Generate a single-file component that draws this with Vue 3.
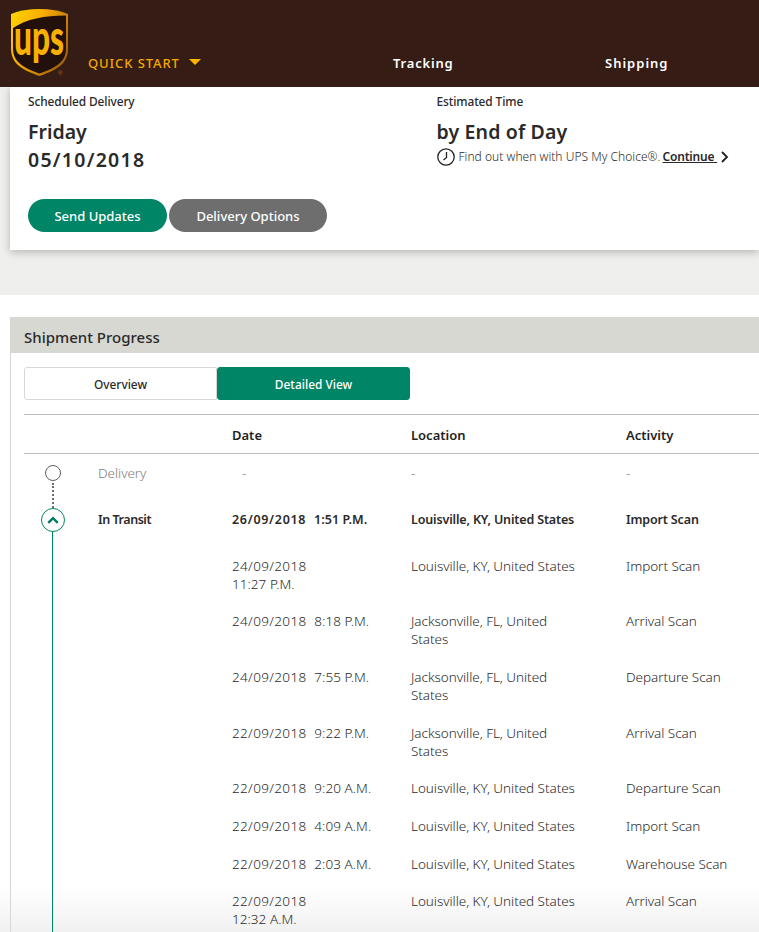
<script setup>
const rows = [
  { date: '24/09/2018', time: '11:27 P.M.', wrap: true, loc: 'Louisville, KY, United States', act: 'Import Scan', h: 55 },
  { date: '24/09/2018', time: '8:18 P.M.', loc: 'Jacksonville, FL, United States', act: 'Arrival Scan', h: 56 },
  { date: '24/09/2018', time: '7:55 P.M.', loc: 'Jacksonville, FL, United States', act: 'Departure Scan', h: 56 },
  { date: '22/09/2018', time: '9:22 P.M.', loc: 'Jacksonville, FL, United States', act: 'Arrival Scan', h: 55 },
  { date: '22/09/2018', time: '9:20 A.M.', loc: 'Louisville, KY, United States', act: 'Departure Scan', h: 38 },
  { date: '22/09/2018', time: '4:09 A.M.', loc: 'Louisville, KY, United States', act: 'Import Scan', h: 38 },
  { date: '22/09/2018', time: '2:03 A.M.', loc: 'Louisville, KY, United States', act: 'Warehouse Scan', h: 37 },
  { date: '22/09/2018', time: '12:32 A.M.', wrap: true, loc: 'Louisville, KY, United States', act: 'Arrival Scan', h: 55 }
]
</script>

<template>
  <div class="page">
    <div class="fade"></div>
    <header class="topbar">
      <svg class="logo" width="60" height="72" viewBox="0 0 60 72">
        <defs>
          <linearGradient id="gold" x1="0" y1="0" x2="1" y2="0.6">
            <stop offset="0" stop-color="#ffd800" />
            <stop offset="0.45" stop-color="#f7ab00" />
            <stop offset="1" stop-color="#a9660a" />
          </linearGradient>
        </defs>
        <path d="M29.500 1C19 1 9 2.800 1 6V40C1 54 9 61 29.500 68C50 61 58 54 58 40V6C50 2.800 40 1 29.500 1Z" fill="url(#gold)" />
        <path d="M56 7.500V40C56 52 49 59 29.500 65.500C10 59 3 52 3 40V20C16 11 35 7.500 56 7.500Z" fill="#22100c" />
        <text x="29" y="47" text-anchor="middle" textLength="50" lengthAdjust="spacingAndGlyphs" class="logo-text">ups</text>
        <text x="48" y="67" class="logo-reg">®</text>
      </svg>
      <a class="quick">QUICK START<span class="caret"></span></a>
      <a class="nav nav-tracking">Tracking</a>
      <a class="nav nav-shipping">Shipping</a>
    </header>

    <section class="band">
      <div class="card">
        <div class="card-cols">
          <div class="col-left">
            <div class="label">Scheduled Delivery</div>
            <div class="big">Friday<br /><span class="big-date">05/10/2018</span></div>
          </div>
          <div class="col-right">
            <div class="label">Estimated Time</div>
            <div class="big big-end">by End of Day</div>
            <div class="hint">
              <svg width="18" height="18" viewBox="0 0 18 18" fill="none" stroke="#222">
                <circle cx="9" cy="9" r="8.200" stroke-width="1.300" />
                <path d="M9.500 4V9.500L6.500 12" stroke-width="1.300" />
              </svg>
              <span>Find out when with UPS My Choice®.</span>
              <a class="continue">Continue&nbsp;</a>
              <svg class="chev" width="9" height="12" viewBox="0 0 9 12" fill="none" stroke="#222" stroke-width="1.800">
                <path d="M2 1L7 6L2 11" />
              </svg>
            </div>
          </div>
        </div>
        <div class="pills">
          <button class="pill green">Send Updates</button>
          <button class="pill grey">Delivery Options</button>
        </div>
      </div>
    </section>

    <section class="panel">
      <h2 class="panel-title">Shipment Progress</h2>
      <div class="panel-body">
        <div class="toggle">
          <button class="tab">Overview</button>
          <button class="tab active">Detailed View</button>
        </div>
        <div class="table">
          <div class="grid head">
            <span></span><span></span><span>Date</span><span>Location</span><span>Activity</span>
          </div>
          <div class="rows">
            <div class="rail"></div>
            <div class="dots"></div>
            <div class="grid row-delivery">
              <span class="marker-cell"><i class="ring"></i></span>
              <span>Delivery</span>
              <span class="dash">-</span>
              <span>-</span>
              <span>-</span>
            </div>
            <div class="grid row-current">
              <span class="marker-cell">
                <i class="ring-green">
                  <svg width="12" height="8" viewBox="0 0 12 8" fill="none" stroke="#007a63" stroke-width="2.400">
                    <path d="M1.200 6.800L6 2.200L10.800 6.800" />
                  </svg>
                </i>
              </span>
              <span class="status">In Transit</span>
              <span class="date-strong">26/09/2018&nbsp;&nbsp;<span class="time">1:51 P.M.</span></span>
              <span>Louisville, KY, United States</span>
              <span>Import Scan</span>
            </div>
            <div v-for="(r, i) in rows" :key="i" class="grid row" :style="{ height: r.h + 'px' }">
              <span></span>
              <span></span>
              <span class="date-cell">
                {{ r.date }}<br v-if="r.wrap" /><template v-else>&nbsp;&nbsp;</template><span class="time">{{ r.time }}</span>
              </span>
              <span class="loc-cell">{{ r.loc }}</span>
              <span>{{ r.act }}</span>
            </div>
          </div>
        </div>
      </div>
    </section>
  </div>
</template>

<style>
html, body { margin: 0; background: #fff; }
</style>

<style scoped>
.page {
  position: relative;
  width: 759px;
  height: 932px;
  overflow: hidden;
  background: #fff;
  color: #2a2a2a;
  font-family: "Noto Sans", "Open Sans", sans-serif;
}
.topbar {
  position: relative;
  height: 87px;
  background: #351c15;
}
.logo { position: absolute; left: 10px; top: 8px; overflow: visible; }
.logo-text {
  font-family: "Lato", sans-serif;
  font-weight: 900;
  font-size: 50px;
  fill: #f9b000;
}
.logo-reg { font-size: 6px; fill: #a9701c; font-family: "Liberation Sans", sans-serif; }
.quick {
  position: absolute;
  left: 88px;
  top: 54px;
  font-size: 13px;
  line-height: 18px;
  font-weight: 500;
  letter-spacing: 0.9px;
  color: #f5a800;
  display: flex;
  align-items: center;
}
.caret {
  margin-left: 9px;
  margin-bottom: 3px;
  border-left: 6px solid transparent;
  border-right: 6px solid transparent;
  border-top: 6px solid #ffb500;
}
.nav {
  position: absolute;
  top: 54px;
  font-size: 13px;
  line-height: 18px;
  font-weight: 600;
  letter-spacing: 0.8px;
  color: #fff;
}
.nav-tracking { left: 393px; }
.nav-shipping { left: 605px; letter-spacing: 1px; }
.band {
  height: 208px;
  background: #efefed;
  padding-left: 10px;
}
.card {
  height: 163px;
  background: #fff;
  box-shadow: 0 2px 8px rgba(0, 0, 0, 0.25);
  box-sizing: border-box;
  padding: 6px 0 0 18px;
}
.card-cols { display: flex; }
.col-left { width: 408.500px; }
.label { font-size: 11.900px; line-height: 16px; font-weight: 500; letter-spacing: -0.1px; }
.big { margin-top: 9px; font-size: 19.500px; line-height: 28px; font-weight: 600; letter-spacing: 0; }
.big-end { letter-spacing: 0.15px; }
.big-date { letter-spacing: 1.25px; }
.hint {
  display: flex;
  align-items: center;
  gap: 4px;
  margin-top: 2px;
  font-size: 12px;
  line-height: 18px;
  font-weight: 300;
  letter-spacing: 0.03px;
  white-space: nowrap;
}
.continue { margin-left: -2px; font-weight: 600; text-decoration: underline; letter-spacing: -0.2px; }
.chev { margin-left: -1px; }
.pills { display: flex; gap: 2px; margin-top: 25px; }
.pill {
  height: 33px;
  border: 0;
  border-radius: 17px;
  color: #fff;
  font: 500 13px/31px "Noto Sans", sans-serif;
  padding: 1px 0 0;
}
.green { width: 139px; background: #008566; }
.grey { width: 158px; background: #6e6e6e; }
.panel {
  position: relative;
  margin: 22px 0 0 10px;
  border-left: 1px solid #d8d8d3;
}
.panel-title {
  margin: 0;
  height: 36px;
  box-sizing: border-box;
  padding-left: 13px;
  background: #d8d8d3;
  font-size: 15px;
  line-height: 41px;
  font-weight: 500;
}
.panel-body { padding: 14px 0 0 13px; }
.toggle { display: flex; }
.tab {
  width: 193px;
  height: 33px;
  padding: 1px 0 0;
  box-sizing: border-box;
  background: #fff;
  border: 1px solid #d8d8d3;
  border-radius: 3px 0 0 3px;
  color: #2a2a2a;
  font: 500 11.900px/30px "Noto Sans", sans-serif;
}
.tab.active {
  background: #008566;
  border-color: #008566;
  color: #fff;
  border-radius: 3px;
}
.table { margin-top: 14px; border-top: 1px solid #bcbcb8; }
.grid {
  display: grid;
  grid-template-columns: 74px 134px 179px 215px 1fr;
  font-size: 13.500px;
  line-height: 18px;
  font-weight: 300;
  letter-spacing: -0.05px;
}
.head {
  height: 39px;
  box-sizing: border-box;
  padding-top: 11px;
  border-bottom: 1px solid #bcbcb8;
  font-size: 13px;
  font-weight: 600;
  color: #1f1f1f;
  letter-spacing: 0;
}
.rows { position: relative; }
.rail {
  position: absolute;
  left: 28px;
  top: 78px;
  height: 420px;
  width: 1px;
  background: #008566;
}
.dots {
  position: absolute;
  left: 27.500px;
  top: 29px;
  height: 25px;
  border-left: 2px dotted #6e6e6e;
}
.marker-cell { position: relative; }
.row-delivery { height: 57px; padding-top: 10px; box-sizing: border-box; color: #7d7d7d; }
.row-delivery .dash { padding-left: 10px; }
.ring {
  position: absolute;
  left: 21px;
  top: 1px;
  width: 14px;
  height: 14px;
  border: 1px solid #5f5f5f;
  border-radius: 50%;
  background: #fff;
}
.row-current { height: 46px; font-weight: 600; font-size: 12.500px; letter-spacing: -0.15px; }
.status { letter-spacing: -0.45px; }
.date-strong { letter-spacing: 0.7px; }
.time { letter-spacing: 0.05px; }
.ring-green {
  position: absolute;
  left: 17px;
  top: -3px;
  width: 22px;
  height: 22px;
  box-sizing: content-box;
  border: 1px solid #008566;
  border-radius: 50%;
  background: #fff;
  display: flex;
  align-items: center;
  justify-content: center;
}
.row { box-sizing: border-box; }
.date-cell { max-width: 150px; letter-spacing: 0.35px; }
.loc-cell { max-width: 170px; }
.fade {
  position: absolute;
  left: 0;
  right: 0;
  bottom: 0;
  height: 46px;
  background: linear-gradient(rgba(238, 238, 238, 0), rgba(238, 238, 238, 0.85));
}
</style>
